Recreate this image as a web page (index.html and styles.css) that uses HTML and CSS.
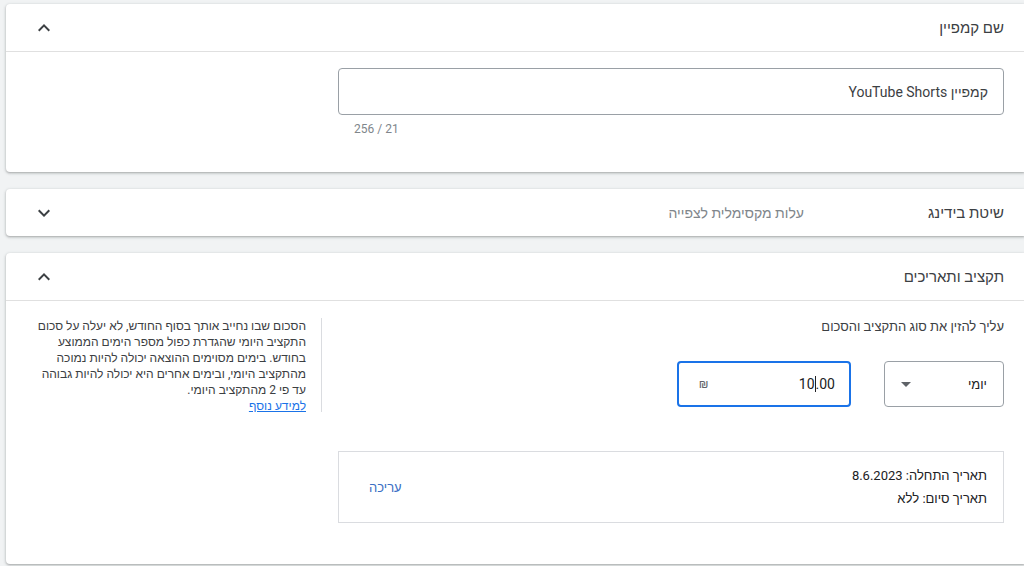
FILE: index.html
```html
<!DOCTYPE html>
<html lang="he" dir="rtl">
<head>
    <meta charset="UTF-8">
    <meta name="viewport" content="width=device-width, initial-scale=1.0">
    <title>קמפיין</title>
    <link rel="stylesheet" href="styles.css">
</head>
<body>
    <div class="panel">
        <div class="panel-header">
            <span class="panel-title">שם קמפיין</span>
            <svg class="chevron" viewBox="0 0 24 24"><path d="M12 8l-6 6 1.41 1.41L12 10.83l4.59 4.58L18 14z"/></svg>
        </div>
        <div class="panel-body name-body">
            <div class="text-field">קמפיין YouTube Shorts</div>
            <div class="counter">256 / 21</div>
        </div>
    </div>

    <div class="panel">
        <div class="panel-header">
            <span class="panel-title">שיטת בידינג</span>
            <span class="panel-summary">עלות מקסימלית לצפייה</span>
            <svg class="chevron" viewBox="0 0 24 24"><path d="M16.59 8.59L12 13.170 7.41 8.59 6 10l6 6 6-6z"/></svg>
        </div>
    </div>

    <div class="panel">
        <div class="panel-header">
            <span class="panel-title">תקציב ותאריכים</span>
            <svg class="chevron" viewBox="0 0 24 24"><path d="M12 8l-6 6 1.41 1.41L12 10.83l4.59 4.58L18 14z"/></svg>
        </div>
        <div class="panel-body budget-body">
            <div class="budget-main">
                <div class="budget-label">עליך להזין את סוג התקציב והסכום</div>
                <div class="budget-row">
                    <div class="select-box">
                        <span>יומי</span>
                        <span class="select-arrow"></span>
                    </div>
                    <div class="amount-box">
                        <span class="amount">10<span class="caret"></span>.00</span>
                        <span class="currency">₪</span>
                    </div>
                </div>
                <div class="dates-box">
                    <div class="dates">
                        <div>תאריך התחלה: 8.6.2023</div>
                        <div>תאריך סיום: ללא</div>
                    </div>
                    <a href="#" class="edit-link">עריכה</a>
                </div>
            </div>
            <div class="budget-help">
                הסכום שבו נחייב אותך בסוף החודש, לא יעלה על סכום<br>
                התקציב היומי שהגדרת כפול מספר הימים הממוצע<br>
                בחודש. בימים מסוימים ההוצאה יכולה להיות נמוכה<br>
                מהתקציב היומי, ובימים אחרים היא יכולה להיות גבוהה<br>
                עד פי 2 מהתקציב היומי.<br>
                <a href="#">למידע נוסף</a>
            </div>
        </div>
    </div>
</body>
</html>
```

FILE: styles.css
```css
body {
    font-family: Roboto, "Liberation Sans", Arial, sans-serif;
    background-color: #f1f3f4;
    color: #202124;
    margin: 0;
    padding: 4px 0 0 6px;
    overflow: hidden;
}
.panel {
    background-color: #fff;
    border-radius: 4px 0 0 4px;
    box-shadow: 0 1px 2px rgba(60, 64, 67, 0.3), 0 1px 3px 1px rgba(60, 64, 67, 0.12);
    margin-bottom: 17px;
}
.panel-header {
    display: flex;
    align-items: center;
    height: 47px;
    padding: 0 20px 0 26px;
}
.panel-title {
    font-size: 15px;
    color: #3c4043;
    width: 200px;
}
.panel-summary {
    font-size: 14px;
    color: #80868b;
}
.chevron {
    width: 24px;
    height: 24px;
    fill: #3c4043;
    margin-right: auto;
}
.panel-body {
    border-top: 1px solid #e0e0e0;
}
.name-body {
    padding: 16px 20px 36px 0;
}
.text-field {
    width: 634px;
    height: 45px;
    border: 1px solid #9aa0a6;
    border-radius: 4px;
    padding: 0 15px;
    display: flex;
    align-items: center;
    font-size: 14px;
    color: #3c4043;
}
.counter {
    font-size: 12px;
    color: #80868b;
    width: 634px;
    text-align: left;
    padding: 7px 0 0 0;
    direction: ltr;
    margin-right: 16px;
}
.budget-body {
    display: flex;
    padding: 17px 20px 41px 34px;
}
.budget-main {
    width: 666px;
}
.budget-label {
    font-size: 13px;
    color: #3c4043;
    margin-top: 1px;
}
.budget-row {
    display: flex;
    gap: 33px;
    margin-top: 27px;
}
.select-box {
    width: 102px;
    height: 44px;
    border: 1px solid #9aa0a6;
    border-radius: 4px;
    display: flex;
    align-items: center;
    justify-content: space-between;
    padding: 0 16px 0 0;
    font-size: 13px;
}
.select-arrow {
    width: 0;
    height: 0;
    border-left: 5px solid transparent;
    border-right: 5px solid transparent;
    border-top: 5px solid #5f6368;
    margin-left: 16px;
}
.amount-box {
    width: 142px;
    height: 42px;
    border: 2px solid #1a73e8;
    border-radius: 4px;
    display: flex;
    align-items: center;
    justify-content: space-between;
    padding: 0 14px;
    font-size: 14px;
}
.amount {
    direction: ltr;
    unicode-bidi: isolate;
}
.caret {
    display: inline-block;
    width: 1px;
    height: 16px;
    background-color: #202124;
    vertical-align: -3px;
}
.currency {
    font-size: 12px;
    color: #5f6368;
    margin-left: 6px;
}
.dates-box {
    margin-top: 44px;
    border: 1px solid #dadce0;
    height: 70px;
    display: flex;
    align-items: center;
    justify-content: space-between;
    padding: 0 16px 0 30px;
    font-size: 13px;
}
.dates div {
    line-height: 23px;
}
.edit-link {
    color: #3b6fc4;
    text-decoration: none;
    font-size: 13px;
}
.budget-help {
    margin-right: auto;
    width: 266px;
    height: 94px;
    padding-right: 15px;
    border-right: 1px solid #dadce0;
    font-size: 12px;
    line-height: 16px;
    color: #3c4043;
    white-space: nowrap;
}
.budget-help a {
    color: #1a73e8;
}
```
